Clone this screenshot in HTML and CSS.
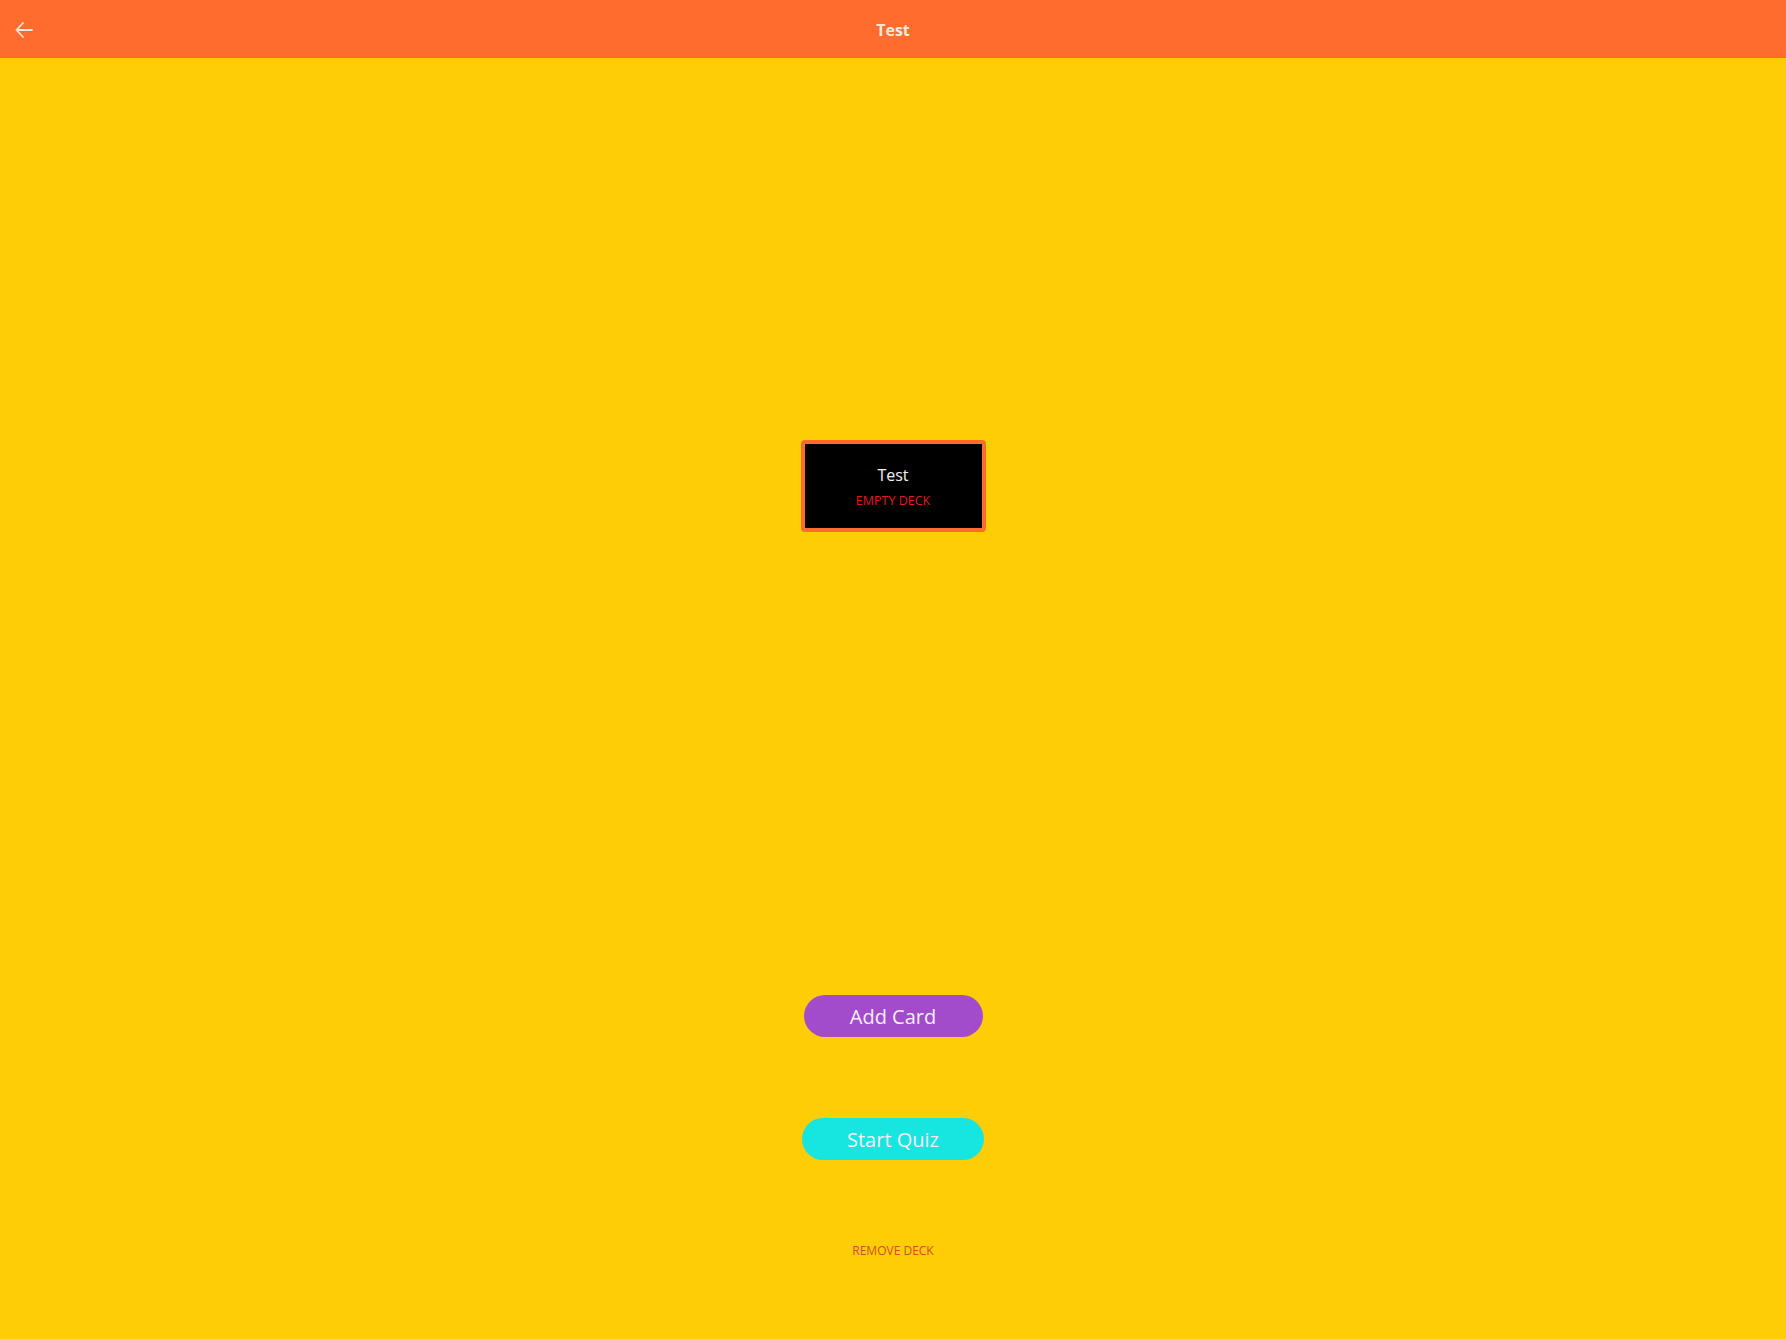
FILE: index.html
```html
<!DOCTYPE html>
<html>
<head>
<meta charset="utf-8">
<title>Test</title>
<link rel="stylesheet" href="styles.css">
</head>
<body>
<header class="topbar">
  <button class="back" aria-label="Back">
    <svg width="18" height="16" viewBox="0 0 18 16"><path d="M8 1 L1.5 8 L8 15 M1.5 8 H17" fill="none" stroke="#fbe6d8" stroke-width="1.8" stroke-linecap="round" stroke-linejoin="round"/></svg>
  </button>
  <h1 class="title">Test</h1>
</header>
<main class="content">
  <div class="deck">
    <div class="deck-name">Test</div>
    <div class="deck-count">EMPTY DECK</div>
  </div>
  <div class="actions">
    <button class="pill pill-add">Add Card</button>
    <button class="pill pill-quiz">Start Quiz</button>
    <button class="remove">REMOVE DECK</button>
  </div>
</main>
</body>
</html>
```
FILE: styles.css
```css
html, body {
  margin: 0;
  padding: 0;
  height: 100%;
}
body {
  background: #fecd05;
  font-family: "Open Sans", "Noto Sans", sans-serif;
}
.topbar {
  position: relative;
  height: 58px;
  background: #ff6c2d;
  display: flex;
  align-items: center;
  justify-content: center;
}
.back {
  position: absolute;
  left: 14px;
  top: 21px;
  background: none;
  border: 0;
  padding: 0;
  width: 20px;
  height: 18px;
  display: flex;
  align-items: center;
  justify-content: center;
}
.title {
  margin: 0;
  font-size: 16px;
  font-weight: 700;
  color: #fbe8dc;
  margin-top: 1px;
}
.content {
  display: flex;
  flex-direction: column;
  align-items: center;
  padding-top: 382px;
}
.deck {
  box-sizing: border-box;
  width: 185px;
  height: 92px;
  background: #000;
  border: 4px solid #ff6c2d;
  border-radius: 4px;
  display: flex;
  flex-direction: column;
  align-items: center;
  padding-top: 20px;
}
.deck-name {
  color: #f2f2f2;
  font-size: 16px;
  line-height: 22px;
}
.deck-count {
  color: #e21b1b;
  font-size: 12.5px;
  line-height: 16px;
  margin-top: 7px;
}
.actions {
  display: flex;
  flex-direction: column;
  align-items: center;
  margin-top: 463px;
}
.pill {
  border: 0;
  border-radius: 21px;
  height: 42px;
  font-family: inherit;
  font-size: 20px;
  color: #f6eefa;
  padding: 0;
}
.pill-add {
  width: 179px;
  background: #a24bcb;
}
.pill-quiz {
  width: 182px;
  background: #16e6df;
  margin-top: 81px;
}
.remove {
  background: none;
  border: 0;
  padding: 0;
  margin-top: 83px;
  font-family: inherit;
  font-size: 12px;
  line-height: 16px;
  color: #d64d1c;
}
```
